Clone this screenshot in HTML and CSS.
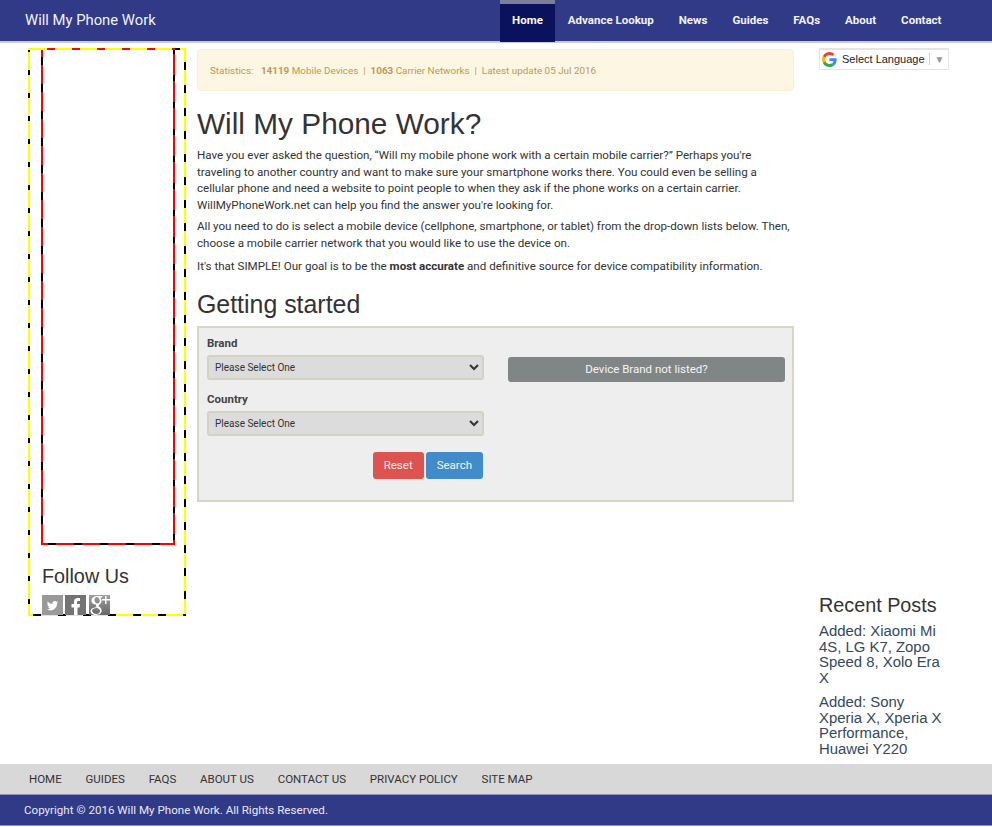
FILE: index.html
```html
<!DOCTYPE html>
<html lang="en">
<head>
  <meta charset="UTF-8" />
  <meta name="viewport" content="width=device-width, initial-scale=1.0" />
  <title>Will My Phone Work?</title>
  <link rel="stylesheet" href="styles.css">
</head>
<body>
  <div class="page">
    <header class="topbar">
      <a class="brand" href="#">Will My Phone Work</a>
      <nav class="mainnav">
        <a class="active" href="#">Home</a>
        <a href="#">Advance Lookup</a>
        <a href="#">News</a>
        <a href="#">Guides</a>
        <a href="#">FAQs</a>
        <a href="#">About</a>
        <a href="#">Contact</a>
      </nav>
    </header>

    <main class="columns">
      <aside class="left">
        <div class="adbox">
          <div class="adslot"></div>
          <h3>Follow Us</h3>
          <div class="social">
            <a class="soc soc-tw" href="#" aria-label="Twitter">
              <svg viewBox="0 0 24 24" width="15" height="15"><path fill="#fff" d="M21 6.6c-.7.3-1.4.5-2.1.6.8-.5 1.3-1.2 1.6-2-.7.4-1.5.7-2.3.9a3.7 3.7 0 0 0-6.3 3.4C8.8 9.3 6.100 7.8 4.3 5.600c-1 1.700-.5 3.900 1.100 5-.6 0-1.200-.2-1.700-.5 0 1.800 1.300 3.300 3 3.700-.5.100-1.100.2-1.700.1.500 1.500 1.900 2.500 3.500 2.600A7.500 7.500 0 0 1 3 18a10.500 10.500 0 0 0 16.200-9.300c.7-.6 1.300-1.300 1.800-2.100z"/></svg>
            </a>
            <a class="soc soc-fb" href="#" aria-label="Facebook">
              <svg viewBox="0 0 21 21" width="21" height="21"><path fill="#fff" d="M9 21v-8.500H6.500V9H9V6.800C9 4 10.700 3 13 3c1 0 1.700.1 2 .1v3h-1.500c-1.100 0-1.500.6-1.500 1.500V9h3l-.4 3.500H12.500V21z"/></svg>
            </a>
            <a class="soc soc-gp" href="#" aria-label="Google Plus">
              <svg viewBox="0 0 21 21" width="21" height="21"><path fill="#fff" d="M8.500 1C5 1 2.500 3 2.500 5.700c0 2.300 1.800 3.900 4.200 3.900h.6c-.2.400-.3.700-.3 1.100 0 .7.400 1.100.8 1.600-3.300.1-6.300 1.400-6.300 4 0 2.300 2.700 3.700 5.500 3.700 3.400 0 5.700-2.100 5.700-4.200 0-1.700-.6-2.600-2.100-3.800-.6-.5-1-.8-1-1.300 0-.5.500-.9 1-1.300 1.200-.9 1.900-2 1.900-3.500 0-1.500-.7-2.600-1.500-3.200h1.500L13.800 1zM7.800 2.100c1.600 0 2.700 1.700 2.900 3.500.2 1.800-.7 3-2.100 3-1.600 0-2.900-1.500-3.100-3.300-.2-1.800.7-3.200 2.300-3.200zM8 13c1.800.6 3 1.500 3 3 0 1.700-1.300 2.900-3.600 2.900-2.300 0-4.300-1.200-4.300-3.100 0-1.900 2.500-2.900 4.900-2.800z"/><path fill="#fff" d="M16 1h1.500v3H21v1.500h-3.500V9H16V5.500h-3V4h3z"/></svg>
            </a>
          </div>
        </div>
      </aside>

      <section class="content">
        <div class="stats">
          <span class="stats-label">Statistics:</span>
          <b>14119</b> Mobile Devices &nbsp;|&nbsp; <b>1063</b> Carrier Networks &nbsp;|&nbsp; Latest update 05 Jul 2016
        </div>
        <h1>Will My Phone Work?</h1>
        <p>Have you ever asked the question, “Will my mobile phone work with a certain mobile carrier?” Perhaps you're traveling to another country and want to make sure your smartphone works there. You could even be selling a cellular phone and need a website to point people to when they ask if the phone works on a certain carrier. WillMyPhoneWork.net can help you find the answer you're looking for.</p>
        <p>All you need to do is select a mobile device (cellphone, smartphone, or tablet) from the drop-down lists below. Then, choose a mobile carrier network that you would like to use the device on.</p>
        <p class="simple">It's that SIMPLE! Our goal is to be the <b>most accurate</b> and definitive source for device compatibility information.</p>
        <h2>Getting started</h2>
        <form class="lookup">
          <div class="lookup-left">
            <label for="brand">Brand</label>
            <select id="brand"><option>Please Select One</option></select>
            <label for="country">Country</label>
            <select id="country"><option>Please Select One</option></select>
            <div class="actions">
              <button type="reset" class="btn btn-red">Reset</button>
              <button type="submit" class="btn btn-blue">Search</button>
            </div>
          </div>
          <div class="lookup-right">
            <a class="btn btn-grey" href="#">Device Brand not listed?</a>
          </div>
        </form>
      </section>

      <aside class="right">
        <div class="translate">
          <svg viewBox="0 0 48 48" width="15" height="15">
            <path fill="#EA4335" d="M24 9.5c3.500 0 6.700 1.200 9.200 3.600l6.900-6.900C35.900 2.400 30.400 0 24 0 14.600 0 6.500 5.400 2.600 13.200l8 6.200C12.500 13.600 17.800 9.500 24 9.500z"/>
            <path fill="#4285F4" d="M46.900 24.500c0-1.600-.1-3.100-.4-4.500H24v9h12.900c-.6 3-2.200 5.500-4.800 7.200l7.700 6c4.500-4.200 7.100-10.300 7.100-17.700z"/>
            <path fill="#FBBC05" d="M10.500 28.600c-.5-1.400-.8-3-.8-4.600s.3-3.200.8-4.600l-8-6.200C.9 16.500 0 20.100 0 24s.9 7.500 2.600 10.800l7.900-6.200z"/>
            <path fill="#34A853" d="M24 48c6.500 0 11.900-2.100 15.900-5.800l-7.700-6c-2.200 1.400-4.900 2.300-8.200 2.300-6.200 0-11.500-4.200-13.400-9.800l-8 6.200C6.500 42.600 14.600 48 24 48z"/>
          </svg>
          <span class="translate-text">Select Language</span>
          <span class="translate-arrow">▼</span>
        </div>
        <h3>Recent Posts</h3>
        <a class="post" href="#">Added: Xiaomi Mi 4S, LG K7, Zopo Speed 8, Xolo Era X</a>
        <a class="post" href="#">Added: Sony Xperia X, Xperia X Performance, Huawei Y220</a>
      </aside>
    </main>

    <footer>
      <nav class="footnav">
        <a href="#">HOME</a>
        <a href="#">GUIDES</a>
        <a href="#">FAQS</a>
        <a href="#">ABOUT US</a>
        <a href="#">CONTACT US</a>
        <a href="#">PRIVACY POLICY</a>
        <a href="#">SITE MAP</a>
      </nav>
      <div class="copyright">Copyright © 2016 Will My Phone Work. All Rights Reserved.</div>
    </footer>
  </div>
</body>
</html>
```

FILE: styles.css
```css
* {
  box-sizing: border-box;
}
body {
  font-family: Roboto, Arial, sans-serif;
  font-size: 12px;
  color: #333;
  background: white;
  margin: 0;
}
a {
  text-decoration: none;
}
.page {
  height: 100vh;
  display: flex;
  flex-direction: column;
  overflow: hidden;
}

/* top bar */
.topbar {
  flex: none;
  height: 43px;
  background: #313a87;
  border-bottom: 2px solid #c6c9e0;
  display: flex;
  justify-content: space-between;
  padding: 0 38px 0 25px;
}
.brand {
  color: #f2f3fa;
  font-size: 14.8px;
  line-height: 41px;
}
.mainnav {
  display: flex;
}
.mainnav a {
  color: #f2f3fa;
  font-weight: 700;
  font-size: 11.5px;
  line-height: 41px;
  padding: 0 12.5px;
}
.mainnav a.active {
  background: #0a125e;
  border-top: 4px solid #7b8098;
  line-height: 33px;
  height: 42px;
  color: white;
}

/* three columns */
.columns {
  flex: 1;
  min-height: 0;
  display: grid;
  grid-template-columns: 158px 597px 130px;
  column-gap: 11px;
  padding: 5px 0 0 28px;
  overflow: hidden;
}
.right {
  margin-left: 14px;
  width: 130px;
}

/* left box, each side is its own dashed line */
.adbox {
  height: 568px;
  padding: 0 11px 0 13px;
  background:
    repeating-linear-gradient(90deg, #ff0 0 5px, #000 5px 13px, #ff0 13px 25px) left bottom / 100% 2px no-repeat,
    linear-gradient(90deg, #ff0 0 144px, #000 144px 152px, #ff0 152px) left top / 100% 2px no-repeat,
    repeating-linear-gradient(180deg, #000 0 4px, #ff0 4px 22px, #000 22px 23px) left top / 2px 100% no-repeat,
    repeating-linear-gradient(180deg, #ff0 0 14px, #000 14px 22px, #ff0 22px 23px) right top / 2px 100% no-repeat;
}
.adslot {
  width: 134px;
  height: 497px;
  background:
    repeating-linear-gradient(90deg, #ff0 0 6px, #f00 6px 14px, #ff0 14px 25px) left top / 100% 2px no-repeat,
    repeating-linear-gradient(90deg, #f00 0 7px, #000 7px 15px, #f00 15px 26px) left bottom / 100% 2px no-repeat,
    repeating-linear-gradient(180deg, #f00 0 9px, #000 9px 17px, #f00 17px 27px) left top / 2px 100% no-repeat,
    repeating-linear-gradient(180deg, #000 0 6px, #f00 6px 27px) right top / 2px 100% no-repeat;
}
.adbox h3 {
  font-family: "Liberation Sans", Arial, sans-serif;
  font-weight: 400;
  font-size: 19.8px;
  line-height: 24px;
  margin: 19px 0 7px 1px;
  color: #333;
}
.social {
  display: flex;
  gap: 2px;
  margin-left: 1px;
}
.soc {
  width: 21px;
  height: 20px;
  display: flex;
  align-items: center;
  justify-content: center;
  overflow: hidden;
}
.soc svg {
  flex: none;
  display: block;
}
.soc-tw {
  background: #999;
}
.soc-fb {
  background: #737373;
}
.soc-gp {
  background: linear-gradient(#a0a0a0, #666);
  margin-left: 1px;
}

/* middle */
.content {
  padding-top: 1px;
}
.stats {
  height: 42px;
  line-height: 41px;
  background: #fcf6e3;
  border: 1px solid #f8f0da;
  border-radius: 4px;
  padding-left: 12px;
  color: #c09853;
  font-size: 9.9px;
}
.stats-label {
  margin-right: 5px;
}
.content h1 {
  font-family: "Liberation Sans", Arial, sans-serif;
  font-weight: 400;
  font-size: 29.8px;
  line-height: 34px;
  margin: 16px 0 6px;
  color: #333;
}
.content p {
  margin: 0 0 5px;
  line-height: 16.5px;
  font-size: 11.6px;
}
.content p.simple {
  margin-top: 7px;
}
.content h2 {
  font-family: "Liberation Sans", Arial, sans-serif;
  font-weight: 400;
  font-size: 24.9px;
  line-height: 30px;
  margin: 14px 0 7px;
  color: #333;
}
.lookup {
  height: 176px;
  background: #eee;
  border: 2px solid #d8d6c4;
  display: grid;
  grid-template-columns: 277px 277px;
  column-gap: 24px;
  padding: 0 7px 0 8px;
}
.lookup label {
  display: block;
  font-weight: 700;
  font-size: 11.5px;
  line-height: 14px;
  margin: 8px 0 5px;
  color: #444;
}
.lookup select + label {
  margin-top: 12px;
  margin-bottom: 5px;
}
.lookup select {
  display: block;
  width: 100%;
  height: 25px;
  background: #dcdcdc;
  border: 2px solid #d4d2c0;
  border-radius: 3px;
  font-family: Roboto, Arial, sans-serif;
  font-size: 10px;
  color: #333;
  padding-left: 2px;
}
.actions {
  display: flex;
  justify-content: flex-end;
  gap: 2px;
  margin: 16px 1px 0 0;
}
.btn {
  display: block;
  border: 0;
  border-radius: 3px;
  color: #f5f5f5;
  font-family: Roboto, Arial, sans-serif;
  font-size: 11.5px;
  height: 27px;
  line-height: 27px;
  padding: 0 11px;
  cursor: pointer;
}
.btn-red {
  background: #dc5350;
}
.btn-blue {
  background: #428bca;
}
.btn-grey {
  background: #808585;
  height: 25px;
  line-height: 25px;
  text-align: center;
  margin-top: 29px;
}

/* right */
.translate {
  height: 22px;
  margin-top: 0;
  border: 2px solid #e4e4e4;
  border-width: 2px 1px 1px;
  display: flex;
  align-items: center;
  padding: 0 0 1px 2px;
  font-family: "Liberation Sans", Arial, sans-serif;
  font-size: 11px;
  color: #222;
}
.translate-text {
  margin-left: 5px;
  padding-right: 4px;
  border-right: 1px solid #ccc;
}
.translate-arrow {
  font-size: 10px;
  color: #999;
  margin-left: 5px;
}
.right h3 {
  font-family: "Liberation Sans", Arial, sans-serif;
  font-weight: 400;
  font-size: 19.8px;
  line-height: 24px;
  margin: 523px 0 7px;
  color: #333;
}
.post {
  display: block;
  font-family: "Liberation Sans", Arial, sans-serif;
  font-size: 14.9px;
  line-height: 15.5px;
  color: #34495e;
  margin-bottom: 9px;
}

/* footer */
footer {
  flex: none;
  height: 63px;
}
.footnav {
  height: 31px;
  background: #d8d8d8;
  border-bottom: 1px solid #8d92bd;
  display: flex;
  gap: 23.8px;
  padding-left: 29px;
  line-height: 31px;
}
.footnav a {
  color: #333;
  font-size: 11.5px;
}
.copyright {
  height: 31px;
  background: #313a87;
  border-bottom: 1px solid #8d92bd;
  color: #e8e9f4;
  padding-left: 24px;
  line-height: 30px;
  font-size: 11.6px;
}
```
